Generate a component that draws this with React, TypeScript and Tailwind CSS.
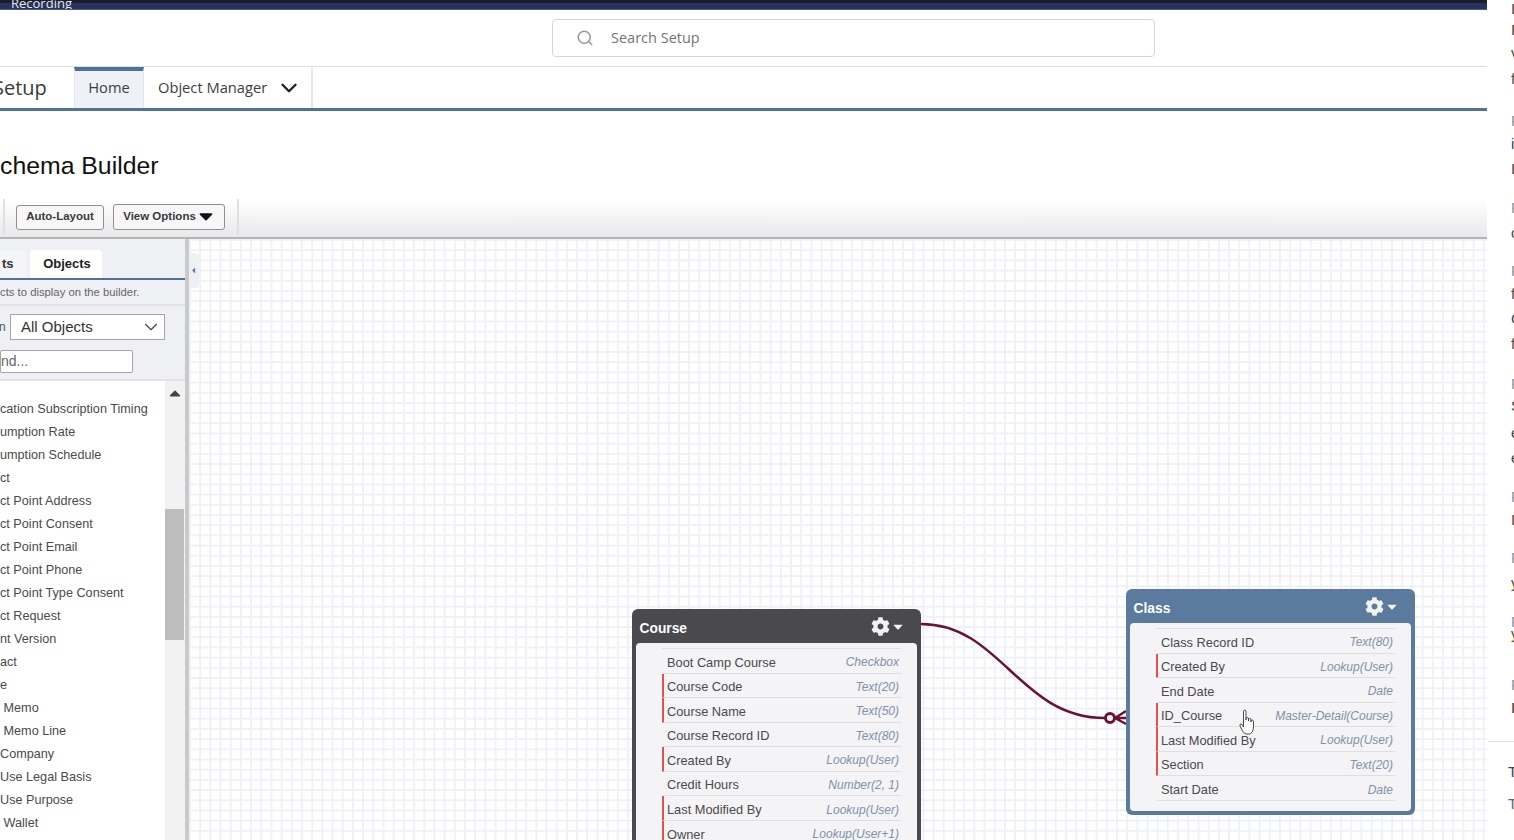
import React from "react";
import { FaCog, FaCaretDown, FaCaretUp, FaCaretLeft } from "react-icons/fa";
import { ChevronDown, Search } from "lucide-react";

const listRows = [
  "cation Subscription Timing", "umption Rate", "umption Schedule", "ct", "ct Point Address", "ct Point Consent",
  "ct Point Email", "ct Point Phone", "ct Point Type Consent", "ct Request", "nt Version", "act", "e",
  " Memo", " Memo Line", "Company", "Use Legal Basis", "Use Purpose", " Wallet",
];

type Field = { name: string; type: string; req?: boolean };

const courseFields: Field[] = [
  { name: "Boot Camp Course", type: "Checkbox" },
  { name: "Course Code", type: "Text(20)", req: true },
  { name: "Course Name", type: "Text(50)", req: true },
  { name: "Course Record ID", type: "Text(80)" },
  { name: "Created By", type: "Lookup(User)", req: true },
  { name: "Credit Hours", type: "Number(2, 1)" },
  { name: "Last Modified By", type: "Lookup(User)", req: true },
  { name: "Owner", type: "Lookup(User+1)", req: true },
];

const classFields: Field[] = [
  { name: "Class Record ID", type: "Text(80)" },
  { name: "Created By", type: "Lookup(User)", req: true },
  { name: "End Date", type: "Date" },
  { name: "ID_Course", type: "Master-Detail(Course)", req: true },
  { name: "Last Modified By", type: "Lookup(User)", req: true },
  { name: "Section", type: "Text(20)", req: true },
  { name: "Start Date", type: "Date" },
];

const sideLetters = [
  { c: "I", h: "h-[21px]", t: "text-[#4a3a30]" }, { c: "I", h: "h-[23px]", t: "text-[#4a3a30]" }, { c: "v", h: "h-[26px]", t: "text-[#444]" },
  { c: "f", h: "h-[42px]", t: "text-[#5a4636]" }, { c: "F", h: "h-[23px]", t: "text-[#8a92a0]" }, { c: "i", h: "h-[25px]", t: "text-[#444]" },
  { c: "I", h: "h-[39px]", t: "text-[#4a3a30]" }, { c: "F", h: "h-[25px]", t: "text-[#8a92a0]" }, { c: "c", h: "h-[38px]", t: "text-[#444]" },
  { c: "F", h: "h-[23px]", t: "text-[#8a92a0]" }, { c: "f", h: "h-[25px]", t: "text-[#5a4636]" }, { c: "C", h: "h-[25px]", t: "text-[#444]" },
  { c: "f", h: "h-[40px]", t: "text-[#5a4636]" }, { c: "F", h: "h-[22px]", t: "text-[#8a92a0]" }, { c: "S", h: "h-[27px]", t: "text-[#444]" },
  { c: "e", h: "h-[25px]", t: "text-[#444]" }, { c: "e", h: "h-[39px]", t: "text-[#444]" }, { c: "F", h: "h-[23px]", t: "text-[#8a92a0]" },
  { c: "I", h: "h-[38px]", t: "text-[#5c3a26]" }, { c: "F", h: "h-[25px]", t: "text-[#8a92a0]" }, { c: "y", h: "h-[42px]", t: "text-[#5a4a20]" },
  { c: "F", h: "h-[12px] leading-[12px]", t: "text-[#8a92a0]" }, { c: "y", h: "h-[48px] leading-[12px]", t: "text-[#5a4a20]" }, { c: "F", h: "h-[23px]", t: "text-[#8a92a0]" },
  { c: "I", h: "h-[20px]", t: "text-[#4a3020]" },
];

function ObjectCard({ title, fields, head }: { title: string; fields: Field[]; head: string }) {
  return (
    <div className={`w-[289px] rounded-[6px] px-[4px] pb-[4px] ${head}`}>
      <div className="flex h-[34px] items-center justify-between pl-[3.5px] pr-[14px] pt-[6px] text-[13.8px] font-bold text-white">
        <span>{title}</span>
        <span className="-mt-[5px] flex items-center gap-[3px] text-[#f2f2f2]">
          <FaCog className="h-[19px] w-[19px]" />
          <FaCaretDown className="h-[15px] w-[10px]" />
        </span>
      </div>
      <div className="rounded-[4px] bg-[#f4f3f6] pb-[10px] pl-[26px] pr-[16px] pt-[5px]">
        <div className="border-t border-[#e0e0e3]">
          {fields.map((f) => (
            <div
              key={f.name}
              className={`flex h-[24.55px] items-center justify-between border-b border-[#dfdfe2] border-l-[2px] pl-[3px] pr-[2px] pt-[3px] text-[12.8px] text-[#4a4a4c] ${f.req ? "border-l-[#e0524d]" : "border-l-transparent"}`}
            >
              <span>{f.name}</span>
              <span className="text-[12px] italic text-[#7f92aa]">{f.type}</span>
            </div>
          ))}
        </div>
      </div>
    </div>
  );
}

export default function App() {
  return (
    <div className="flex h-[840px] w-[1514px] overflow-hidden bg-white font-['Liberation_Sans',sans-serif]">
      <div className="flex w-[1487px] flex-col">
        {/* recording bar */}
        <div className="h-[10px] shrink-0 overflow-hidden border-b-[1px] border-[#4a5a78] bg-[linear-gradient(#1d1c2c_0,#1d1c2c_3px,#25345c_3px)]">
          <div className="-mt-[5px] pl-[11px] font-['Open_Sans',sans-serif] text-[13px] leading-[16px] text-[#e8e8ee]">Recording</div>
        </div>

        {/* search */}
        <div className="flex h-[57px] shrink-0 items-center justify-center border-b border-[#dedede] pr-[1px]">
          <div className="ml-[221px] flex h-[38px] w-[603px] items-center rounded-[4px] border border-[#d6d6d6] pl-[23px] font-['Open_Sans',sans-serif] text-[14.5px] text-[#747474]">
            <Search className="h-[18px] w-[18px] text-[#9a9a9a]" strokeWidth={2} />
            <span className="ml-[17px]">Search Setup</span>
          </div>
        </div>

        {/* nav */}
        <div className="flex h-[44px] shrink-0 border-b-[3px] border-[#4f7396] font-['Open_Sans',sans-serif]">
          <div className="flex w-[74px] items-center overflow-hidden text-[20px] text-[#3a3a3a]">
            <span className="-ml-[7px]">Setup</span>
          </div>
          <div className="flex w-[70px] items-center justify-center border-x border-[#e4e6ea] border-t-[4px] border-t-[#4f7396] bg-[#eef1f6] pb-[4px] text-[14.7px] text-[#3e3e3e]">Home</div>
          <div className="flex w-[169px] items-center border-r-2 border-[#e8e8e8] pl-[14px] text-[14.7px] text-[#3e3e3e]">
            <span>Object Manager</span>
            <ChevronDown className="ml-[9px] h-[26px] w-[26px] text-[#222]" strokeWidth={2.2} />
          </div>
        </div>

        {/* title */}
        <div className="flex h-[88px] shrink-0 items-center pt-[22px] text-[24.8px] text-[#111]">chema Builder</div>

        {/* toolbar */}
        <div className="flex h-[40px] shrink-0 items-center border-b-2 border-[#b4b4b6] bg-[linear-gradient(#ffffff,#e9e9ec)] pb-[2px]">
          <div className="ml-[3px] h-[36px] w-[2px] bg-[#e0e0e2]" />
          <button className="ml-[11px] h-[25px] w-[88px] rounded-[3px] border border-[#8f8f8f] bg-[#f7f7f8] text-[11.5px] font-bold text-[#3a3a3a]">Auto-Layout</button>
          <button className="ml-[9px] flex h-[26px] w-[112px] items-center justify-center gap-[3px] rounded-[3px] border border-[#8f8f8f] bg-[#f7f7f8] pr-[2px] text-[11.5px] font-bold text-[#3a3a3a]">
            View Options
            <FaCaretDown className="-mt-[3px] h-[22px] w-[14px] text-[#111]" />
          </button>
          <div className="ml-[12px] h-[36px] w-[2px] bg-[#e0e0e2]" />
        </div>

        {/* body */}
        <div className="flex min-h-0 flex-1">
          {/* sidebar */}
          <div className="flex w-[189px] shrink-0 flex-col overflow-hidden border-r-[4px] border-[#c9cacd] bg-[#eef0f4]">
            <div className="flex h-[41px] shrink-0 items-end gap-[3px] border-b-2 border-[#4f7396]">
              <div className="flex h-[27px] w-[27px] items-center rounded-tr-[4px] bg-[#f4f5f8] pb-[2px] pl-[2px] text-[13px] font-bold text-[#333]">ts</div>
              <div className="flex h-[28px] w-[72px] items-center justify-center rounded-t-[4px] bg-white pl-[2px] text-[13px] font-bold text-[#222]">Objects</div>
            </div>
            <div className="flex h-[26px] shrink-0 items-center border-b-2 border-[#e3e3e6] pt-[1px] text-[11.3px] text-[#666]">cts to display on the builder.</div>
            <div className="flex h-[75px] shrink-0 flex-col border-b-2 border-[#e3e3e6]">
              <div className="mt-[8px] flex items-center">
                <span className="-ml-[1px] w-[11px] text-[12px] text-[#555]">n</span>
                <div className="flex h-[26px] w-[155px] items-center justify-between border border-[#a5a5a8] bg-white pl-[10px] pr-[2px] text-[15px] text-[#333]">
                  All Objects
                  <ChevronDown className="h-[22px] w-[22px] text-[#444]" strokeWidth={1.25} />
                </div>
              </div>
              <div className="mt-[10px] flex h-[23px] w-[133px] items-center rounded-[2px] border border-[#a5a5a8] bg-white text-[14px] text-[#666]">nd...</div>
            </div>
            <div className="flex min-h-0 flex-1 bg-white">
              <div className="w-[165px] pt-[17px] text-[12.66px] text-[#4a4a4c]">
                {listRows.map((r) => (
                  <div key={r} className="h-[23px] whitespace-pre leading-[23px]">{r}</div>
                ))}
              </div>
              <div className="relative w-[20px] bg-[#f2f2f3]">
                <FaCaretUp className="mx-auto mt-[3px] h-[18px] w-[18px] text-[#444]" />
                <div className="absolute left-0 top-[128px] h-[131px] w-[19px] bg-[#bdbdbd]" />
              </div>
            </div>
          </div>

          {/* canvas */}
          <div className="relative min-w-0 flex-1 overflow-hidden bg-white bg-[linear-gradient(#eff1f6_1.5px,transparent_1.5px),linear-gradient(90deg,#eff1f6_1.5px,transparent_1.5px)] bg-[size:10.2px_10.2px]">
            <div className="absolute left-0 top-[14px] flex h-[35px] w-[10px] items-center rounded-r-[4px] bg-[#eef0f4]">
              <FaCaretLeft className="h-[9px] w-[9px] text-[#5b7fa3]" />
            </div>
            <svg className="absolute inset-0 h-full w-full" fill="none">
              <path d="M732 385 C812 385 830 479 916 479" stroke="#6a1235" strokeWidth="2.5" />
              <circle cx="921" cy="479" r="4.5" stroke="#6a1235" strokeWidth="3" fill="#ffffff" />
              <path d="M926 479 L937 472 M926 479 H937 M926 479 L937 485" stroke="#6a1235" strokeWidth="2.5" />
            </svg>
            <div className="absolute left-[443px] top-[370px]">
              <ObjectCard title="Course" fields={courseFields} head="bg-[#4a494e]" />
            </div>
            <div className="absolute left-[937px] top-[350px]">
              <ObjectCard title="Class" fields={classFields} head="bg-[#5a7b9e]" />
            </div>
            <svg className="absolute left-[1050px] top-[470px] h-[26px] w-[16px]" viewBox="0 0 16 26" fill="#ffffff" stroke="#3a3a3a" strokeWidth="0.9" strokeLinejoin="round">
              <path d="M4.5 15 V3 Q4.5 1 5.8 1 Q7 1 7 3 V11 V9.5 Q7 8.5 8.3 8.5 Q9.5 8.5 9.5 10 V12 V10.5 Q9.5 9.5 10.7 9.5 Q12 9.5 12 11 V13 V12 Q12 11 13.2 11 Q14.5 11 14.5 13 V18 Q14.5 23.5 11 25 H7 Q4 24 3 21 L1 17 Q0.5 15 2 15 Q3.3 15 4.5 18 Z" />
            </svg>
          </div>
        </div>
      </div>

      {/* right panel */}
      <div className="flex min-w-0 flex-1 flex-col overflow-hidden">
        <div className="flex h-[741px] flex-col pl-[24px] text-[15px] leading-[18px]">
          {sideLetters.map((l, i) => (
            <div key={i} className={`shrink-0 ${l.h} ${l.t}`}>{l.c}</div>
          ))}
        </div>
        <div className="ml-[1px] border-t border-[#e2e2e2] pl-[20px] pt-[21px] text-[15px] text-[#444]">
          <div className="h-[32px] leading-[18px]">T</div>
          <div className="leading-[18px] text-[#666]">T</div>
        </div>
      </div>
    </div>
  );
}
